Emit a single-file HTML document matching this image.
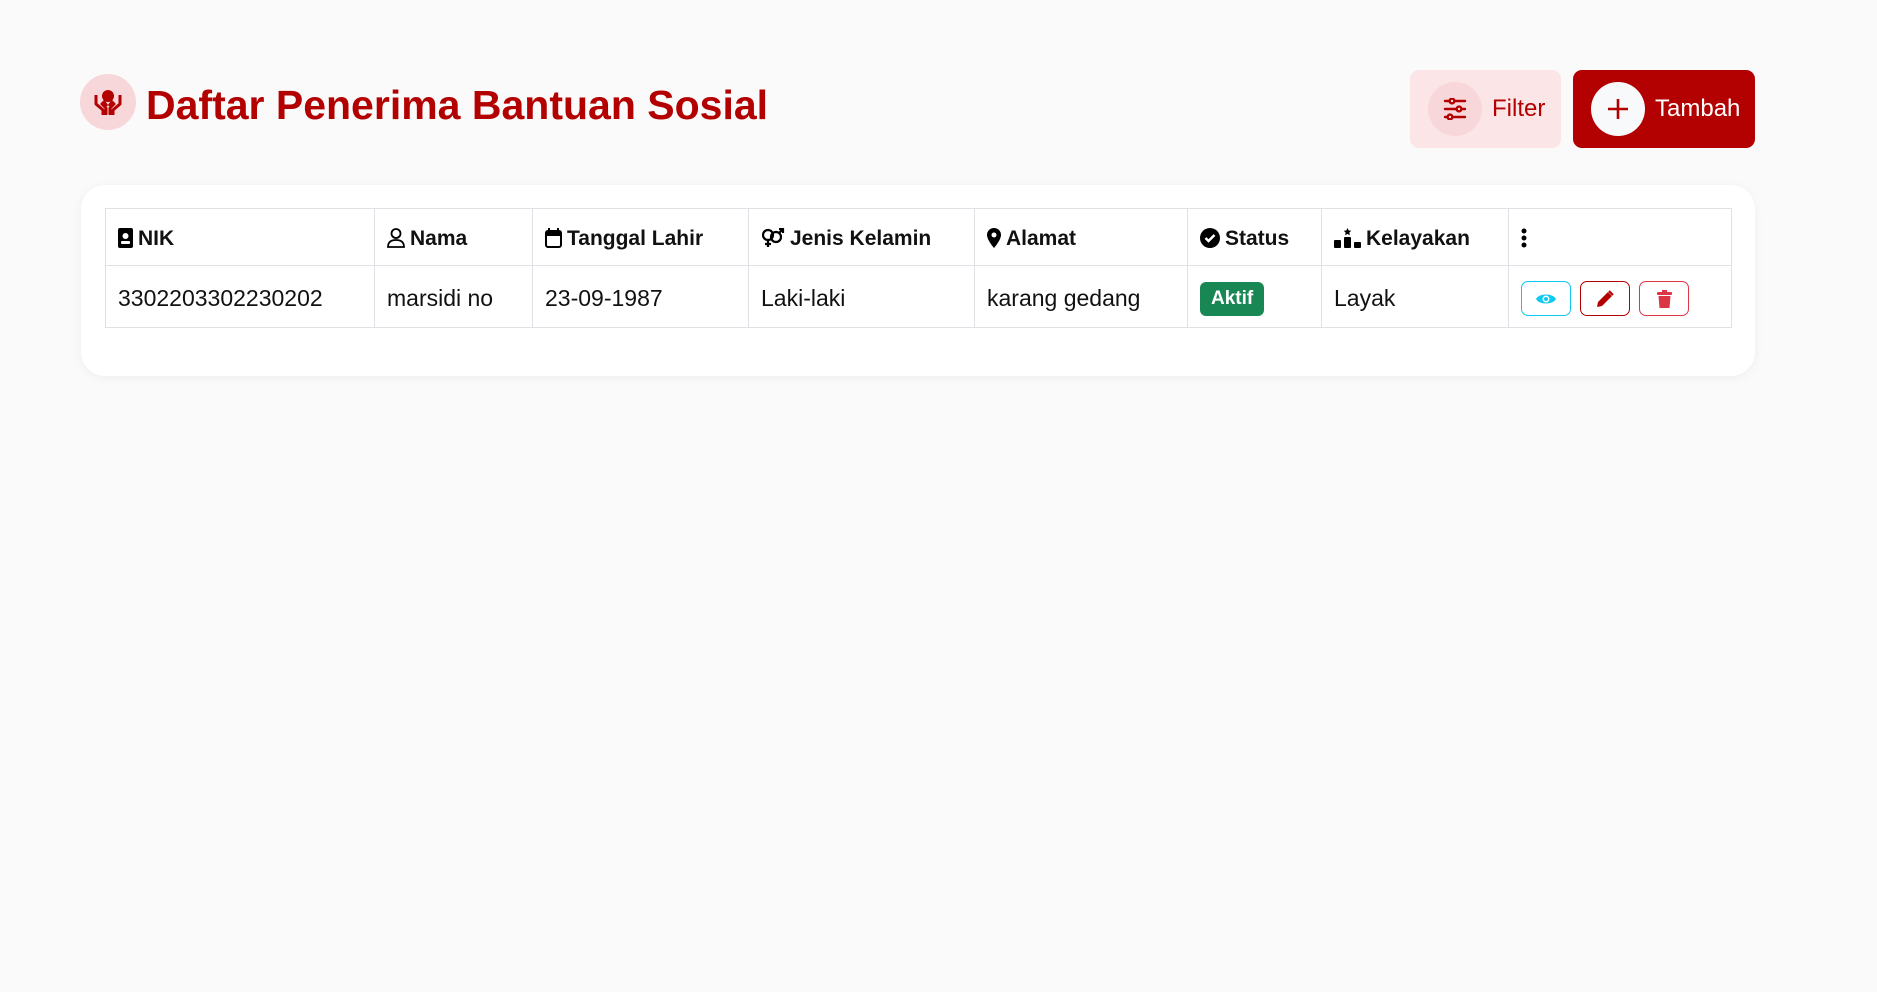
<!DOCTYPE html>
<html><head><meta charset="utf-8"><style>
*{box-sizing:border-box;margin:0;padding:0}
body{width:1877px;height:992px;background:#fafafa;font-family:"Liberation Sans",sans-serif;color:#111;position:relative;overflow:hidden}
.ic{position:absolute;left:80px;top:74px;width:56px;height:56px;border-radius:50%;background:#f8d7da;display:flex;align-items:center;justify-content:center}
h1{position:absolute;left:146px;top:82px;font-size:41px;font-weight:bold;color:#b30000;letter-spacing:0;white-space:nowrap}
.btn{position:absolute;top:70px;height:78px;border-radius:9px;display:flex;align-items:center;font-size:24px}
.filter{left:1410px;width:151px;background:#fbe5e6;color:#b30000}
.tambah{left:1573px;width:182px;background:#b30000;color:#fff}
.circ{width:54px;height:54px;border-radius:50%;display:flex;align-items:center;justify-content:center;margin-left:18px;margin-right:10px}
.card{position:absolute;left:81px;top:185px;width:1674px;height:191px;background:#fff;border-radius:24px;box-shadow:0 2px 10px rgba(0,0,0,.05)}
table{position:absolute;left:105px;top:208px;border-collapse:collapse;table-layout:fixed;width:1626px}
td,th{border:1px solid #dee2e6;padding:4px 12px 0;text-align:left;white-space:nowrap}
th{height:57px;font-size:21px;font-weight:bold}
td{height:62px;font-size:23px}
th svg{vertical-align:-3px;margin-right:5px}
.badge{display:inline-block;background:#198754;color:#fff;font-weight:bold;font-size:19px;padding:6px 11px;border-radius:6px}
.ab{display:inline-flex;align-items:center;justify-content:center;width:50px;height:35px;border-radius:7px;border:1px solid;margin-right:9px;vertical-align:middle}
</style></head><body>
<div class="ic"><svg width="28" height="26" viewBox="0 0 28 26"><circle cx="14" cy="7" r="6" fill="#b30000"/><path d="M2 6v9l7 6v4h3v-6l-4-4 2-2 3 4" fill="none" stroke="#b30000" stroke-width="3" stroke-linejoin="round"/><path d="M26 6v9l-7 6v4h-3v-6l4-4-2-2-3 4" fill="none" stroke="#b30000" stroke-width="3" stroke-linejoin="round"/></svg></div>
<h1>Daftar Penerima Bantuan Sosial</h1>
<div class="btn filter"><div class="circ" style="background:#f8d7da;margin-left:18px"><svg width="24" height="22" viewBox="0 0 24 22" stroke="#b30000" stroke-width="2.4" fill="none" stroke-linecap="round"><path d="M2 3h20M2 11h20M2 19h20"/><circle cx="9" cy="3" r="2.4" fill="#f8d7da"/><circle cx="16" cy="11" r="2.4" fill="#f8d7da"/><circle cx="7" cy="19" r="2.4" fill="#f8d7da"/></svg></div>Filter</div>
<div class="btn tambah"><div class="circ" style="background:#f8f9fa;margin-left:18px"><svg width="22" height="22" viewBox="0 0 22 22" stroke="#b30000" stroke-width="2.6"><path d="M11 1v20M1 11h20"/></svg></div>Tambah</div>
<div class="card"></div>
<table>
<colgroup><col style="width:269px"><col style="width:158px"><col style="width:216px"><col style="width:226px"><col style="width:213px"><col style="width:134px"><col style="width:187px"><col style="width:223px"></colgroup>
<tr>
<th><svg width="15" height="20" viewBox="0 0 15 20"><rect width="15" height="20" rx="2"/><circle cx="7.5" cy="8" r="3" fill="#fff"/><rect x="3" y="13" width="9" height="3" rx="1" fill="#fff"/></svg>NIK</th>
<th><svg width="18" height="20" viewBox="0 0 18 20" fill="none" stroke="#000" stroke-width="1.8"><circle cx="9" cy="5.5" r="4.5"/><path d="M1 19c0-5 3-7 8-7s8 2 8 7z"/></svg>Nama</th>
<th><svg width="17" height="20" viewBox="0 0 17 20"><rect x="1" y="3" width="15" height="16" rx="2" fill="none" stroke="#000" stroke-width="2"/><rect x="1" y="3" width="15" height="5"/><path d="M4 0v4M13 0v4" stroke="#000" stroke-width="2"/></svg>Tanggal Lahir</th>
<th><svg width="24" height="20" viewBox="0 0 24 20" fill="none" stroke="#000" stroke-width="2.2"><circle cx="7" cy="7" r="5"/><path d="M7 12v7M4 16h6"/><circle cx="15" cy="9" r="5"/><path d="M18 5l4-4M18 1h4v4"/></svg>Jenis Kelamin</th>
<th><svg width="14" height="20" viewBox="0 0 14 20"><path d="M7 0a7 7 0 0 1 7 7c0 5-7 13-7 13S0 12 0 7a7 7 0 0 1 7-7z"/><circle cx="7" cy="7" r="2.5" fill="#fff"/></svg>Alamat</th>
<th><svg width="20" height="20" viewBox="0 0 20 20"><circle cx="10" cy="10" r="10"/><path d="M5.5 10l3 3 6-6" stroke="#fff" stroke-width="2.5" fill="none"/></svg>Status</th>
<th><svg width="27" height="20" viewBox="0 0 27 20"><path d="M13.5 0l1.2 2.5 2.6.3-2 1.8.6 2.6-2.4-1.3-2.4 1.3.6-2.6-2-1.8 2.6-.3z"/><rect x="0" y="12" width="7" height="8" rx="1"/><rect x="10" y="9" width="7" height="11" rx="1"/><rect x="20" y="14" width="7" height="6" rx="1"/></svg>Kelayakan</th>
<th><svg width="6" height="20" viewBox="0 0 6 20"><circle cx="3" cy="3" r="2.5"/><circle cx="3" cy="10" r="2.5"/><circle cx="3" cy="17" r="2.5"/></svg></th>
</tr>
<tr>
<td>3302203302230202</td><td>marsidi no</td><td>23-09-1987</td><td>Laki-laki</td><td>karang gedang</td>
<td><span class="badge">Aktif</span></td><td>Layak</td>
<td><span class="ab" style="border-color:#0dcaf0"><svg width="20" height="14" viewBox="0 0 20 14"><path d="M0 7C3 1 17 1 20 7 17 13 3 13 0 7z" fill="#0dcaf0"/><circle cx="10" cy="7" r="3.5" fill="#fff"/><circle cx="10" cy="7" r="2" fill="#0dcaf0"/></svg></span><span class="ab" style="border-color:#b30000"><svg width="18" height="18" viewBox="0 0 18 18"><path d="M1 17l1-5L12 2l4 4L6 16z" fill="#b30000"/><path d="M13 1l4 4" stroke="#b30000" stroke-width="2"/></svg></span><span class="ab" style="border-color:#dc3545"><svg width="15" height="18" viewBox="0 0 15 18" fill="#dc3545"><rect x="0" y="2" width="15" height="3" rx="1"/><rect x="5" y="0" width="5" height="3"/><path d="M1.5 6h12l-1 12h-10z"/></svg></span></td>
</tr>
</table>
</body></html>
